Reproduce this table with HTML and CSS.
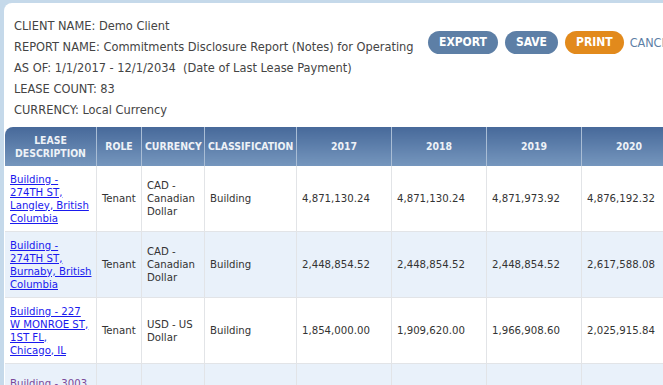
FILE: index.html
```html
<!DOCTYPE html>
<html>
<head>
<meta charset="utf-8">
<link rel="stylesheet" href="styles.css">
</head>
<body>
<div class="panel">
  <div class="top">
    <div class="info">
      <div class="line">CLIENT NAME: Demo Client</div>
      <div class="line">REPORT NAME: Commitments Disclosure Report (Notes) for Operating</div>
      <div class="line">AS OF: 1/1/2017 - 12/1/2034&nbsp; (Date of Last Lease Payment)</div>
      <div class="line">LEASE COUNT: 83</div>
      <div class="line">CURRENCY: Local Currency</div>
    </div>
    <div class="actions">
      <span class="btn blue">EXPORT</span>
      <span class="btn blue">SAVE</span>
      <span class="btn orange">PRINT</span>
      <span class="cancel">CANCEL</span>
    </div>
  </div>
  <table class="grid">
    <thead>
      <tr>
        <th class="c-desc first">LEASE<br>DESCRIPTION</th>
        <th class="c-role">ROLE</th>
        <th class="c-cur">CURRENCY</th>
        <th class="c-cls">CLASSIFICATION</th>
        <th class="c-yr">2017</th>
        <th class="c-yr">2018</th>
        <th class="c-yr">2019</th>
        <th class="c-yr">2020</th>
      </tr>
    </thead>
    <tbody>
      <tr>
        <td><a href="#">Building - 274TH ST, Langley, British Columbia</a></td>
        <td>Tenant</td>
        <td>CAD - Canadian Dollar</td>
        <td>Building</td>
        <td>4,871,130.24</td>
        <td>4,871,130.24</td>
        <td>4,871,973.92</td>
        <td>4,876,192.32</td>
      </tr>
      <tr class="alt">
        <td><a href="#">Building - 274TH ST, Burnaby, British Columbia</a></td>
        <td>Tenant</td>
        <td>CAD - Canadian Dollar</td>
        <td>Building</td>
        <td>2,448,854.52</td>
        <td>2,448,854.52</td>
        <td>2,448,854.52</td>
        <td>2,617,588.08</td>
      </tr>
      <tr>
        <td><a href="#">Building - 227 W MONROE ST, 1ST FL, Chicago, IL</a></td>
        <td>Tenant</td>
        <td>USD - US Dollar</td>
        <td>Building</td>
        <td>1,854,000.00</td>
        <td>1,909,620.00</td>
        <td>1,966,908.60</td>
        <td>2,025,915.84</td>
      </tr>
      <tr class="alt">
        <td><a href="#" class="visited">Building - 3003 N FIRST ST, San Jose, CA</a></td>
        <td>Tenant</td>
        <td>USD - US Dollar</td>
        <td>Building</td>
        <td>1,200,000.00</td>
        <td>1,236,000.00</td>
        <td>1,273,080.00</td>
        <td>1,311,272.40</td>
      </tr>
    </tbody>
  </table>
</div>
</body>
</html>
```
FILE: styles.css
```css
html, body {
  margin: 0;
  padding: 0;
}
body {
  background: #c5d9ea;
  padding: 3px 0 0 4px;
  overflow: hidden;
  height: 385px;
  box-sizing: border-box;
  font-family: "DejaVu Sans Condensed", "DejaVu Sans", sans-serif;
}
.panel {
  background: #ffffff;
  border-top-left-radius: 8px;
  height: 100%;
  width: 760px;
  padding-top: 16px;
}
.top {
  display: flex;
  align-items: flex-start;
}
.info {
  padding-left: 10px;
  width: 414px;
  flex: none;
  color: #444444;
  font-size: 12.7px;
}
.line {
  height: 21px;
  line-height: 14px;
  white-space: nowrap;
}
.actions {
  display: flex;
  align-items: center;
  gap: 7px;
  margin-top: 12px;
  white-space: nowrap;
}
.btn {
  display: inline-block;
  height: 23px;
  line-height: 23px;
  padding: 0 11px;
  border-radius: 12px;
  color: #ffffff;
  font-size: 12px;
  font-weight: bold;
  text-align: center;
}
.blue {
  background: #5d7fa6;
}
.orange {
  background: #e28a1c;
}
.cancel {
  color: #5d7fa6;
  font-size: 12.5px;
  margin-left: -1px;
}
.grid {
  margin: 3px 0 0 1px;
  width: 671px;
  border-collapse: collapse;
  table-layout: fixed;
  font-size: 11.3px;
  color: #333333;
}
.grid th {
  height: 39px;
  padding: 0 3px;
  background: linear-gradient(#47699a, #7596bd);
  color: #eef2f7;
  font-weight: bold;
  font-size: 10.4px;
  line-height: 13px;
  text-align: center;
  border-left: 1px solid #a9bdd5;
}
.grid th.first {
  border-left: none;
  border-top-left-radius: 8px;
}
.c-desc { width: 85px; }
.c-role { width: 38px; }
.c-cur { width: 56px; }
.c-cls { width: 85px; }
.c-yr { width: 88px; }
.grid td {
  height: 65px;
  padding: 0 4px 0 5px;
  line-height: 13px;
  border-left: 1px solid #e2e4e7;
  border-bottom: 1px solid #e2e4e7;
  vertical-align: middle;
  text-align: left;
  overflow: hidden;
}
.grid td:first-child {
  border-left: none;
  padding-right: 2px;
}
.grid tr.alt td {
  background: #e9f1fa;
}
.grid a {
  color: #1a1aee;
  text-decoration: underline;
}
.grid a.visited {
  color: #7a4a9a;
}
```
